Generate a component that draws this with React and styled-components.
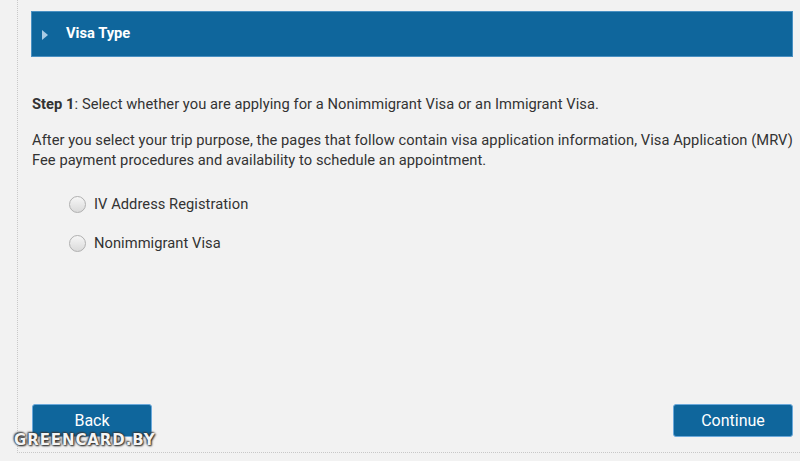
import React from 'react';
import styled, { createGlobalStyle } from 'styled-components';

const GlobalStyle = createGlobalStyle`
    html, body {
        margin: 0;
        padding: 0;
        background: #f2f2f2;
        font-family: Roboto, "Liberation Sans", sans-serif;
        color: #333;
    }
`;

const Page = styled.div`
    width: 800px;
    height: 461px;
    padding-left: 17px;
    box-sizing: border-box;
    position: relative;
    overflow: hidden;
`;

const Frame = styled.div`
    height: 453px;
    border-left: 1px dotted #c8c8c8;
    border-bottom: 1px dotted #c8c8c8;
    box-sizing: border-box;
    padding: 11px 7px 15px 13px;
    display: flex;
    flex-direction: column;
`;

const Header = styled.div`
    height: 46px;
    background: #0f669c;
    border: 1px solid #4a90c2;
    box-sizing: border-box;
    display: flex;
    align-items: center;
    padding-left: 10px;
    color: #fff;
    font-weight: bold;
    font-size: 14.7px;
    padding-bottom: 2px;
`;

const Arrow = styled.span`
    width: 0;
    height: 0;
    border-top: 5px solid transparent;
    border-bottom: 5px solid transparent;
    border-left: 6px solid #a9cbe4;
    margin-right: 18px;
    margin-top: 3px;
`;

const Body = styled.div`
    flex: 1;
    padding-top: 37px;
    padding-left: 1px;
    font-size: 14.7px;
    letter-spacing: 0.05px;
    line-height: 20px;
`;

const Para = styled.p`
    margin: 0 0 16px;
`;

const Options = styled.div`
    display: flex;
    flex-direction: column;
    gap: 19px;
    padding-left: 37px;
    margin-top: 24px;
`;

const Option = styled.label`
    display: flex;
    align-items: center;
    gap: 8px;
`;

const Radio = styled.span`
    width: 17px;
    height: 17px;
    border-radius: 50%;
    border: 1px solid #b0b0b0;
    background: linear-gradient(#f6f6f6, #dadada);
    box-sizing: border-box;
`;

const Footer = styled.div`
    display: flex;
    justify-content: space-between;
    padding-left: 1px;
`;

const Button = styled.button`
    width: 120px;
    height: 33px;
    background: #0f669c;
    border: 1px solid #6ba9db;
    border-radius: 3px;
    color: #fff;
    font-family: Roboto, "Liberation Sans", sans-serif;
    font-size: 16px;
    padding: 0;
`;

const Watermark = styled.div`
    position: absolute;
    left: 14px;
    top: 431px;
    font-family: "DejaVu Sans", sans-serif;
    font-weight: bold;
    font-size: 15px;
    letter-spacing: 0.9px;
    color: #f4f4f4;
    text-shadow: 0 0 2px #222, 1px 1px 2px #222, -1px -1px 2px #444;
`;

const App = () => (
    <>
        <GlobalStyle />
        <Page>
            <Frame>
                <Header>
                    <Arrow />
                    Visa Type
                </Header>
                <Body>
                    <Para>
                        <b>Step 1</b>: Select whether you are applying for a Nonimmigrant Visa or an Immigrant Visa.
                    </Para>
                    <Para>
                        After you select your trip purpose, the pages that follow contain visa application information, Visa Application (MRV)
                        <br />
                        Fee payment procedures and availability to schedule an appointment.
                    </Para>
                    <Options>
                        <Option><Radio />IV Address Registration</Option>
                        <Option><Radio />Nonimmigrant Visa</Option>
                    </Options>
                </Body>
                <Footer>
                    <Button>Back</Button>
                    <Button>Continue</Button>
                </Footer>
            </Frame>
            <Watermark>GREENCARD.BY</Watermark>
        </Page>
    </>
);

export default App;
